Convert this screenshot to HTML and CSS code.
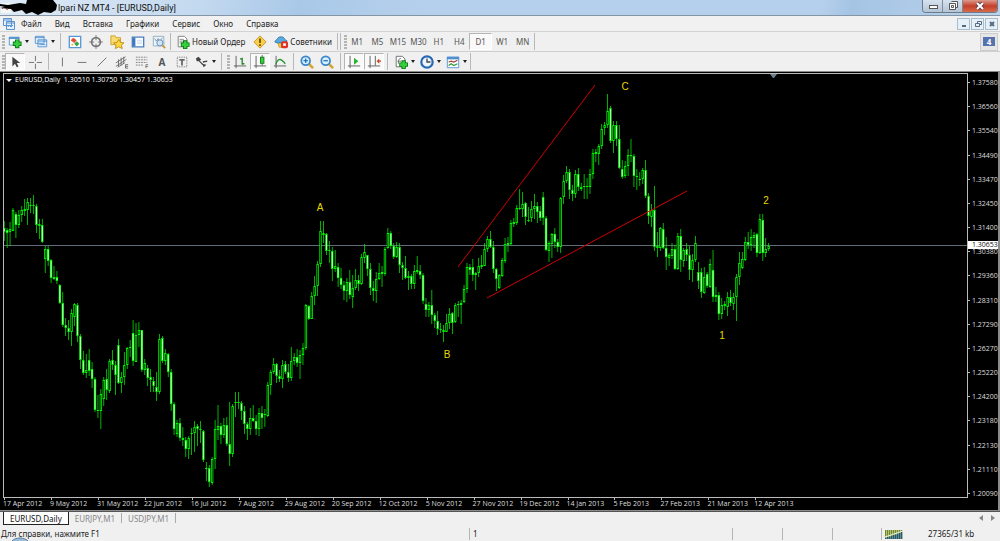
FILE: index.html
```html
<!DOCTYPE html>
<html lang="ru">
<head>
    <meta charset="UTF-8">
    <title>MT4 - [EURUSD,Daily]</title>
    <link rel="stylesheet" href="styles.css">
</head>
<body>
    <header class="titlebar">
        <svg class="scribble" width="58" height="15" viewBox="0 0 58 15"><rect x="1" y="3" width="10" height="10" rx="1" fill="#f4f8f4"/><path d="M2 9l3-3 2 4 3-3" fill="none" stroke="#c66"/><path d="M0 4L8 5 20 3 26 4 27 0H53L57 5 56 10 51 13 44 12 38 15 32 12 26 14 22 10 14 12 11 9 0 8 5 7 0 6z" fill="#000"/></svg>
        <span class="title">lpari NZ MT4 - [EURUSD,Daily]</span>
        <div class="window-buttons">
            <button type="button" aria-label="Свернуть"><svg width="12" height="8"><rect x="2.500" y="3.500" width="8" height="3" fill="#fff" stroke="#555"/></svg></button>
            <button type="button" aria-label="Развернуть"><svg width="12" height="10"><path d="M4.500.5h6v6h-2M2.500 2.500h6v6h-6zM4.500 4.500h2v2h-2z" fill="#fff" stroke="#555"/></svg></button>
            <button type="button" class="close" aria-label="Закрыть"><svg width="12" height="10"><path d="M3 2l6 6M9 2l-6 6" stroke="#644" stroke-width="4"/><path d="M3 2l6 6M9 2l-6 6" stroke="#fff" stroke-width="2"/></svg></button>
        </div>
    </header>

    <nav class="menubar">
        <svg width="12" height="12" viewBox="0 0 12 12" fill="#e4f0fb" stroke="#5b93cf"><path d="M.5.5h8v7h-8zM.5 2h8M3.500 3.500h8v8h-8zM3.500 5h8M5 9l1-2 2 2 2-2"/></svg>
        <button type="button">Файл</button>
        <button type="button">Вид</button>
        <button type="button">Вставка</button>
        <button type="button">Графики</button>
        <button type="button">Сервис</button>
        <button type="button">Окно</button>
        <button type="button">Справка</button>
        <div class="mdi-buttons">
            <button type="button" aria-label="Свернуть окно"><svg width="8" height="8"><path d="M2 6h4" stroke="#556b80" stroke-width="2"/></svg></button>
            <button type="button" aria-label="Восстановить окно"><svg width="8" height="8"><path d="M3.500 3V1.500h4v3H6M1.500 3.500h4v3h-4z" fill="none" stroke="#556b80"/></svg></button>
            <button type="button" aria-label="Закрыть окно"><svg width="8" height="8"><path d="M2 2l4 4M6 2L2 6" stroke="#556b80" stroke-width="2"/></svg></button>
        </div>
    </nav>

    <div class="toolbar">
        <i class="grip"></i>
        <button type="button" class="tool drop" aria-label="Новый график"><svg viewBox="0 0 16 16"><path d="M1.500 2.500h11v9h-11z" fill="#f4faff" stroke="#4f8fcf"/><path d="M1 3.500h12" stroke="#4f8fcf" stroke-width="2"/><path d="M10.500 5v10M5.500 10h10" stroke="#0a7a14" stroke-width="5"/><path d="M10.500 6v8M6.500 10h8" stroke="#35d03c" stroke-width="3"/></svg></button>
        <button type="button" class="tool drop" aria-label="Профили"><svg viewBox="0 0 16 16" fill="#e6f2fc" stroke="#4f8fcf"><path d="M1.500 1.500h10v8h-10zM1 3h11M4.500 5.500h10v8h-10zM4 7h11M6 11h7"/></svg></button>
        <i class="sep spaced"></i>
        <button type="button" class="tool" aria-label="Обзор рынка"><svg viewBox="0 0 16 16"><path d="M1.500 1.500h13v13h-13z" fill="#fff" stroke="#5797d6" stroke-width="1.500"/><path d="M3 6l3-3 4 3-3 3z" fill="#e05030"/><path d="M7 10l3-3 3 3-3 3z" fill="#35a845"/><path d="M4 10h2v2H4z" fill="#e0b040"/></svg></button>
        <button type="button" class="tool" aria-label="Окно данных"><svg viewBox="0 0 16 16" fill="none" stroke="#777"><circle cx="8" cy="8" r="5" stroke-width="2"/><path d="M8 0v6M8 10v6M0 8h6M10 8h6"/></svg></button>
        <button type="button" class="tool" aria-label="Навигатор"><svg viewBox="0 0 16 16"><path d="M1 1h5l1 2h5v8H1z" fill="#f8dc72" stroke="#c99b22"/><path d="M10 5l2 3.500 4 .5-3 2.500 1 4-4-2-4 2 1-4-3-2.500 4-.5z" fill="#ffd83c" stroke="#b9881c"/></svg></button>
        <button type="button" class="tool" aria-label="Терминал"><svg viewBox="0 0 16 16"><path d="M1.500 2.500h13v11h-13z" fill="#fff" stroke="#4a7fc1" stroke-width="1.500"/><path d="M2 3h3v10H2z" fill="#3d77bd"/><path d="M7 6h6M7 8h6M7 10h6" stroke="#c5d6ea"/></svg></button>
        <button type="button" class="tool" aria-label="Тестер стратегий"><svg viewBox="0 0 16 16"><path d="M1.500 1.500h12v11h-12z" fill="#eef5fb" stroke="#8aa9c4"/><path d="M3 4l2 3 2-3 2 3 3-4" fill="none" stroke="#7a8d9c"/><circle cx="9" cy="9" r="3.500" fill="#cfe5f5" stroke="#5d87b0"/><path d="M12 12l3 3" stroke="#c8952b" stroke-width="2"/></svg></button>
        <i class="sep"></i>
        <button type="button" class="tool wide"><svg viewBox="0 0 16 16"><path d="M2.500 1.500h7l3 3v9h-10z" fill="#fff" stroke="#777"/><path d="M4 5h5M4 7h7M4 9h4" stroke="#888"/><path d="M10.500 6v10M5.500 11h10" stroke="#0a7a14" stroke-width="5"/><path d="M10.500 7v8M6.500 11h8" stroke="#35d03c" stroke-width="3"/></svg>Новый Ордер</button>
        <button type="button" class="tool" aria-label="MetaEditor"><svg viewBox="0 0 16 16"><path d="M8 1l7 7-7 7-7-7z" fill="#f9cf45" stroke="#c39322"/><path d="M8 4v5M8 10.500v2" stroke="#6b5014" stroke-width="2"/></svg></button>
        <button type="button" class="tool wide"><svg viewBox="0 0 16 16"><path d="M4 8h9l-2 6H6z" fill="#f2cc4e" stroke="#c79a22"/><path d="M1 8c0-2 2-2 3-4s6-3 8 0c0 2 3 2 3 3-3 2-11 3-14 1z" fill="#5aa9dc" stroke="#3478a8"/><rect x="8" y="7" width="8" height="8" rx="2" fill="#df3324"/><path d="M10.500 9.500h3v3h-3z" fill="#fff"/></svg>Советники</button>
        <i class="sep"></i>
        <i class="sep"></i>
        <i class="grip"></i>
        <div class="periods">
            <button type="button">M1</button>
            <button type="button">M5</button>
            <button type="button">M15</button>
            <button type="button">M30</button>
            <button type="button">H1</button>
            <button type="button">H4</button>
            <button type="button" class="pressed">D1</button>
            <button type="button">W1</button>
            <button type="button">MN</button>
        </div>
        <i class="sep"></i>
        <button type="button" class="messages"><span>4</span></button>
    </div>

    <div class="toolbar lower">
        <i class="grip"></i>
        <button type="button" class="tool pressed" aria-label="Курсор"><svg viewBox="0 0 16 16"><path d="M5 2v11l3-3 2 4 2-1-2-4h4z" fill="#444"/></svg></button>
        <button type="button" class="tool" aria-label="Перекрестие"><svg viewBox="0 0 16 16" stroke="#666"><path d="M8.500 1v6M8.500 10v6M1 8.500h6M10 8.500h6"/></svg></button>
        <i class="sep spaced"></i>
        <button type="button" class="tool" aria-label="Вертикальная линия"><svg viewBox="0 0 16 16" stroke="#666"><path d="M8.500 3v10"/></svg></button>
        <button type="button" class="tool" aria-label="Горизонтальная линия"><svg viewBox="0 0 16 16" stroke="#666"><path d="M3 8.500h10"/></svg></button>
        <button type="button" class="tool" aria-label="Трендовая линия"><svg viewBox="0 0 16 16" stroke="#666"><path d="M3 13L13 3"/></svg></button>
        <button type="button" class="tool" aria-label="Равноудаленный канал"><svg viewBox="0 0 16 16" fill="none" stroke="#666"><path d="M1 9l11-7M1 13L13 5M3 14l8-5M4 5v8M7 3v9M10 2v8M15 11h-3v4h3M12 13h3"/></svg></button>
        <button type="button" class="tool" aria-label="Линии Фибоначчи"><svg viewBox="0 0 16 16" fill="none" stroke="#777"><path d="M1 2.500h13M1 5.500h13M1 8.500h13M1 11.500h9" stroke-dasharray="2 1"/><path d="M12.500 15v-4H15M12 13h3"/></svg></button>
        <button type="button" class="tool letter" aria-label="Текст">A</button>
        <button type="button" class="tool" aria-label="Текстовая метка"><svg viewBox="0 0 16 16" fill="none" stroke="#666"><path d="M2.500 2.500h11v11h-11z" stroke-dasharray="1 1"/><path d="M5 5.500h6M8 5v7" stroke-width="2"/></svg></button>
        <button type="button" class="tool drop" aria-label="Стрелки"><svg viewBox="0 0 16 16"><path d="M1 4l3-2 3 3-2 2-3 0z" fill="#444"/><path d="M5 7l4 4M9 8l5-1" stroke="#444" stroke-width="1.500"/><path d="M8 10l5 1-3 3z" fill="#444"/></svg></button>
        <i class="sep spaced"></i>
        <i class="grip"></i>
        <button type="button" class="tool" aria-label="Бары"><svg viewBox="0 0 16 16" fill="none"><path d="M3.500 1v14M1 12.500h14" stroke="#555"/><path d="M8 4.500h2M10.500 3v8M10 10h3" stroke="#23852c" stroke-width="1.500"/></svg></button>
        <button type="button" class="tool pressed" aria-label="Свечи"><svg viewBox="0 0 16 16" fill="none"><path d="M3.500 1v14M1 12.500h14M10.500 0v12" stroke="#555"/><rect x="8.500" y="2.500" width="4" height="7" fill="#31d53a" stroke="#15751c"/></svg></button>
        <button type="button" class="tool" aria-label="Линия"><svg viewBox="0 0 16 16" fill="none"><path d="M3.500 1v14M1 12.500h14" stroke="#555"/><path d="M3 11c2-6 5-9 11-1" stroke="#2a9434" stroke-width="1.500"/></svg></button>
        <i class="sep spaced"></i>
        <button type="button" class="tool" aria-label="Увеличить"><svg viewBox="0 0 16 16"><path d="M10 10l5 5" stroke="#d2a636" stroke-width="3"/><circle cx="6.500" cy="6.500" r="5" fill="#d8efff" stroke="#3c86cc" stroke-width="2"/><path d="M6.500 4v5M4 6.500h5" stroke="#2873b8" stroke-width="1.500"/></svg></button>
        <button type="button" class="tool" aria-label="Уменьшить"><svg viewBox="0 0 16 16"><path d="M10 10l5 5" stroke="#d2a636" stroke-width="3"/><circle cx="6.500" cy="6.500" r="5" fill="#d8efff" stroke="#3c86cc" stroke-width="2"/><path d="M4 6.500h5" stroke="#2873b8" stroke-width="1.500"/></svg></button>
        <i class="sep spaced"></i>
        <button type="button" class="tool pressed" aria-label="Автопрокрутка"><svg viewBox="0 0 16 16" fill="none"><path d="M3.500 1v14M1 12.500h14" stroke="#555"/><path d="M8 3l5 4-5 4z" fill="#27b532"/></svg></button>
        <button type="button" class="tool pressed" aria-label="Сдвиг графика"><svg viewBox="0 0 16 16" fill="none"><path d="M3.500 1v14M1 12.500h14M9.500 1v11" stroke="#555"/><path d="M14 4v6l-3-3z" fill="#c44a28"/><path d="M12 7h4" stroke="#c44a28" stroke-width="1.500"/></svg></button>
        <i class="sep spaced"></i>
        <button type="button" class="tool drop" aria-label="Индикаторы"><svg viewBox="0 0 16 16"><path d="M2.500 1.500h7l3 3v9h-10z" fill="#fff" stroke="#666"/><path d="M5 10c0-6 1-6 3-6M4 7h4" fill="none" stroke="#666"/><path d="M11 6v10M6 11h10" stroke="#0a7a14" stroke-width="5"/><path d="M11 7v8M7 11h8" stroke="#35d03c" stroke-width="3"/></svg></button>
        <button type="button" class="tool drop" aria-label="Периоды"><svg viewBox="0 0 16 16"><circle cx="8" cy="8" r="6.500" fill="#eef7ff" stroke="#2868b4" stroke-width="2.500"/><path d="M8 4v4h4" fill="none" stroke="#444" stroke-width="1.500"/></svg></button>
        <button type="button" class="tool drop" aria-label="Шаблоны"><svg viewBox="0 0 16 16" fill="none"><path d="M1.500 2.500h13v12h-13z" fill="#fff" stroke="#4f8fcf"/><path d="M1 3.500h14" stroke="#4f8fcf" stroke-width="3"/><path d="M3 8l3-1 3 1 4-2" stroke="#a04838" stroke-width="1.500"/><path d="M3 12l3-2 3 2 4-2" stroke="#2e9b43" stroke-width="1.500"/></svg></button>
        <i class="sep"></i>
    </div>

    <main class="chart">
        <div class="plot">
            <svg id="candles" viewBox="4 74 963 423">
                <path class="price-line" d="M4 245.500H967"/>
                <path class="trend" d="M458 267L595 85M487 298L687 191"/>
                <path class="shift-mark" d="M770 74h7l-3 4h-1z"/>
                <g class="waves">
                    <text x="320" y="211">A</text>
                    <text x="447" y="358">B</text>
                    <text x="625" y="90">C</text>
                    <text x="722" y="339">1</text>
                    <text x="766" y="204">2</text>
                </g>
            </svg>
            <div class="quote"><span class="caret"></span>EURUSD,Daily&nbsp; 1.30510 1.30750 1.30457 1.30653</div>
        </div>
        <div class="prices">
            <span>1.37580</span>
            <span>1.36560</span>
            <span>1.35540</span>
            <span>1.34490</span>
            <span>1.33470</span>
            <span>1.32450</span>
            <span>1.31400</span>
            <span>1.30380</span>
            <span>1.29360</span>
            <span>1.28310</span>
            <span>1.27290</span>
            <span>1.26270</span>
            <span>1.25220</span>
            <span>1.24200</span>
            <span>1.23180</span>
            <span>1.22130</span>
            <span>1.21110</span>
            <span>1.20090</span>
            <b class="current">1.30653</b>
        </div>
        <div class="dates">
            <span>17 Apr 2012</span>
            <span>9 May 2012</span>
            <span>31 May 2012</span>
            <span>22 Jun 2012</span>
            <span>16 Jul 2012</span>
            <span>7 Aug 2012</span>
            <span>29 Aug 2012</span>
            <span>20 Sep 2012</span>
            <span>12 Oct 2012</span>
            <span>5 Nov 2012</span>
            <span>27 Nov 2012</span>
            <span>19 Dec 2012</span>
            <span>14 Jan 2013</span>
            <span>5 Feb 2013</span>
            <span>27 Feb 2013</span>
            <span>21 Mar 2013</span>
            <span>12 Apr 2013</span>
        </div>
    </main>

    <div class="tabs">
        <button type="button" class="active">EURUSD,Daily</button>
        <button type="button">EURJPY,M1</button>
        <button type="button">USDJPY,M1</button>
        <div class="scroll">
            <button type="button" aria-label="Назад"><svg width="4" height="6"><path d="M4 0v6L0 3z" fill="#888"/></svg></button>
            <button type="button" aria-label="Вперед"><svg width="4" height="6"><path d="M0 0v6l4-3z" fill="#888"/></svg></button>
        </div>
    </div>

    <footer class="status">
        <span class="help">Для справки, нажмите F1</span>
        <span class="profile">1</span>
        <span class="cell"></span>
        <span class="cell"></span>
        <span class="cell"></span>
        <span class="traffic">
            <svg width="18" height="9" viewBox="0 0 18 9"><path d="M.5 0v9M2.500 0v9M4.500 0v9M6.500 0v9M8.500 0v9M10.500 0v9M12.500 0v9M14.500 0v9M16.500 0v9" stroke="#6f8c1c" stroke-width="1.500"/><path d="M.5 8v1M2.500 7v2M4.500 7v2M6.500 6v3M8.500 5v4M10.500 5v4M12.500 4v5M14.500 3v6M16.500 2v7" stroke="#1f5a78" stroke-width="1.500"/><path d="M0 7l18-6" stroke="#f0f4e8"/></svg>
            27365/31 kb
        </span>
        <svg class="orb" width="18" height="4" viewBox="0 0 18 4"><path d="M1 4c3-4 13-4 16 0" fill="#9dbdd6" stroke="#557f9f"/></svg>
    </footer>

    <script src="chart.js"></script>
</body>
</html>
```
FILE: styles.css
```css
* {
    box-sizing: border-box;
}

body {
    margin: 0;
    height: 100vh;
    display: flex;
    flex-direction: column;
    overflow: hidden;
    background: #f0f0f0;
    color: #222;
    font-family: "Noto Sans", "Open Sans", sans-serif;
    font-size: 8px;
}

button {
    margin: 0;
    padding: 0;
    border: 0;
    background: none;
    color: inherit;
    font: inherit;
    display: flex;
    align-items: center;
    justify-content: center;
}

svg {
    display: block;
    flex: none;
}

/* window title */

.titlebar {
    height: 16px;
    flex: none;
    display: flex;
    align-items: center;
    border-bottom: 1px solid #8495a5;
    background: linear-gradient(100deg, #dfeaf6 0, #c3d9ef 20%, #a9c8e8 30%, #b5d0ec 42%, #b5d0ec 82%, #a5c4e4 85%, #bad3ec 100%);
}

.title {
    color: #111;
    font-family: Roboto, sans-serif;
    font-size: 9px;
}

.window-buttons {
    margin: 0 2px 0 auto;
    align-self: flex-start;
    display: flex;
    height: 13px;
    border: 1px solid #6d7b88;
    border-top: 0;
    border-radius: 0 0 4px 4px;
    overflow: hidden;
}

.window-buttons button {
    width: 20px;
    border-right: 1px solid #7e8b98;
    background: linear-gradient(#d6e2ee, #b4c5d7);
}

.window-buttons .close {
    width: 34px;
    border-right: 0;
    background: linear-gradient(#dc9a8c, #c4402a 50%, #d96a4c);
}

/* menu */

.menubar {
    height: 16px;
    flex: none;
    display: flex;
    align-items: center;
    padding: 0 2px 0 3px;
    border-bottom: 1px solid #d2d2d2;
    background: #f1f1f1;
}

.menubar > button {
    margin-left: 6px;
    margin-right: 7px;
}

.mdi-buttons {
    margin-left: auto;
    display: flex;
    gap: 1px;
}

.mdi-buttons button {
    width: 13px;
    height: 12px;
    border: 1px solid #a9bccd;
    background: #e6f0f9;
}

/* toolbars */

.toolbar {
    height: 20px;
    flex: none;
    display: flex;
    align-items: center;
    border-bottom: 1px solid #cfcfcf;
}

.lower {
    height: 19px;
    border-bottom: 0;
}

.grip {
    width: 3px;
    height: 14px;
    margin-left: 2px;
    background: repeating-linear-gradient(#b4b4b4 0, #b4b4b4 2px, #f0f0f0 2px, #f0f0f0 3px);
}

.sep {
    width: 1px;
    height: 17px;
    margin: 0 1px;
    background: #b8b8b8;
}

.spaced {
    margin: 0 3px;
}

.tool {
    width: 21px;
    height: 17px;
    flex: none;
}

.lower .tool {
    width: 20px;
}

.tool svg {
    width: 14px;
    height: 14px;
}

.drop,
.lower .drop {
    width: 26px;
}

.drop::after,
.caret {
    content: "";
    border: 2px solid transparent;
    border-top: 3px solid #222;
    border-bottom: 0;
    margin-left: 3px;
}

.wide {
    width: auto;
    padding: 0 4px;
    gap: 2px;
}

.letter {
    color: #555;
    font-size: 10px;
    font-weight: bold;
}

.pressed {
    border: 1px solid #b5b5b5;
    border-right-color: #fff;
    border-bottom-color: #fff;
    background: #f9f9f9;
}

.periods {
    width: 186px;
    height: 17px;
    display: flex;
    color: #555;
}

.periods button {
    flex: 1;
}

.messages {
    width: 18px;
    height: 18px;
    margin: 0 2px 0 auto;
    border: 1px solid #ccc;
    background: #e6e6e6;
}

.messages span {
    width: 12px;
    height: 9px;
    background: #5673ae;
    color: #fff;
    font-size: 8px;
    font-weight: bold;
    line-height: 9px;
}

/* chart */

.chart {
    flex: 1;
    min-height: 0;
    display: grid;
    grid-template-columns: minmax(0, 1fr) 30px;
    grid-template-rows: minmax(0, 1fr) 12px;
    padding: 1px 0 0 3px;
    border: solid #8c8c8c;
    border-width: 1px 2px 1px 0;
    background: #000;
    color: #ddd;
    font-family: "Open Sans", "Noto Sans", sans-serif;
    font-size: 7px;
    line-height: 8px;
}

.plot {
    position: relative;
    border: 1px solid #bbb;
}

.plot svg {
    width: 100%;
    height: 100%;
}

.quote {
    position: absolute;
    top: 2px;
    left: 2px;
    display: flex;
    align-items: center;
    gap: 3px;
    color: #fff;
}

.quote .caret {
    border-width: 3px 3px 0;
    border-top-color: #fff;
    margin: 0;
}

.price-line {
    stroke: #5f6b76;
}

.trend {
    stroke: #d00000;
    fill: none;
}

.shift-mark {
    fill: #708090;
}

.waves {
    fill: #e8d800;
    font: 10px "Liberation Sans", Arial, sans-serif;
    text-anchor: middle;
}

.prices {
    position: relative;
    display: flex;
    flex-direction: column;
    justify-content: space-between;
    padding-top: 6px;
}

.prices span::before {
    content: "";
    display: inline-block;
    width: 2px;
    height: 1px;
    margin-right: 2px;
    vertical-align: 2px;
    background: #bbb;
}

.current {
    position: absolute;
    top: 168px;
    left: 0;
    right: 0;
    padding-left: 4px;
    background: #fff;
    color: #111;
    font-weight: normal;
}

.dates {
    grid-column: 1 / 2;
    display: grid;
    grid-template-columns: repeat(17, minmax(0, 20fr)) minmax(0, 71fr);
    white-space: nowrap;
}

.dates span {
    position: relative;
    padding-top: 2px;
}

.dates span::before {
    content: "";
    position: absolute;
    top: 0;
    left: 1px;
    width: 1px;
    height: 2px;
    background: #bbb;
}

/* chart tabs */

.tabs {
    height: 16px;
    flex: none;
    display: flex;
    align-items: flex-start;
    padding-left: 3px;
    border-top: 1px solid #555;
    color: #888;
}

.tabs > button {
    height: 10px;
    margin-top: 1px;
    padding: 0 6px;
    border-right: 1px solid #aaa;
}

.tabs > .active {
    height: 13px;
    margin-top: 0;
    border: 1px solid #222;
    border-top: 0;
    background: #fff;
    color: #111;
}

.scroll {
    display: flex;
    gap: 8px;
    margin: 3px 5px 0 auto;
}

/* status bar */

.status {
    position: relative;
    height: 14px;
    flex: none;
    display: grid;
    grid-template-columns: minmax(0, 469fr) minmax(0, 263fr) 50px 50px 49px 119px;
    align-items: center;
    line-height: 12px;
}

.status span {
    height: 12px;
}

.status .help {
    padding-left: 1px;
}

.profile,
.cell,
.traffic {
    padding-left: 3px;
    border-left: 1px solid #b5b5b5;
}

.traffic {
    display: flex;
    align-items: center;
    gap: 25px;
}

.orb {
    position: absolute;
    left: 11px;
    bottom: 0;
}
```
FILE: chart.js
```js
// high, top of body, bottom of body, low, 1 = up / 0 = down
const bars = [
    [221,228,232,241,0],[228,230,233,248,0],[222,229,232,246,1],[208,210,231,231,1],[212,214,225,238,0],
    [210,215,225,228,1],[206,210,215,222,1],[199,209,211,216,1],[198,202,210,225,1],[198,205,206,213,0],
    [195,205,206,214,0],[204,206,225,233,0],[219,224,226,239,0],[219,225,242,243,0],[246,249,259,273,1],
    [246,249,261,266,0],[259,260,278,283,0],[266,277,279,280,0],[271,277,281,284,0],[284,285,303,304,0],
    [292,303,325,327,0],[318,325,328,336,0],[320,328,332,340,0],[309,313,332,346,1],[303,304,317,326,1],
    [303,305,336,342,0],[334,336,360,369,0],[351,360,373,375,0],[354,370,373,378,1],[349,360,371,376,0],
    [362,369,379,388,0],[377,379,410,412,0],[395,410,411,418,0],[389,394,411,429,1],[377,380,399,406,1],
    [369,379,390,400,0],[359,361,391,393,1],[350,360,365,370,0],[361,365,375,395,0],[339,345,383,384,0],
    [372,377,383,393,1],[352,365,377,385,1],[347,348,365,369,1],[340,347,348,357,0],[320,333,361,366,0],
    [323,335,362,362,1],[322,330,335,347,1],[330,330,370,372,0],[359,363,370,375,1],[365,368,378,386,0],
    [369,377,380,392,0],[377,381,386,392,0],[372,387,392,401,0],[334,339,392,394,1],[336,338,361,363,0],
    [349,353,361,365,1],[353,354,372,377,0],[369,372,404,411,0],[402,404,429,435,0],[420,423,434,437,1],
    [418,423,438,441,0],[427,438,440,446,0],[437,440,449,457,0],[436,438,449,459,1],[428,433,434,455,1],
    [421,427,433,452,1],[424,426,429,446,0],[421,429,430,443,0],[430,431,460,462,0],[462,468,469,481,0],
    [465,468,482,487,0],[457,459,483,485,1],[420,429,459,469,1],[405,426,430,440,1],[423,426,435,444,0],
    [418,425,435,438,1],[417,425,444,446,0],[402,444,454,466,0],[404,406,454,457,1],[392,402,403,417,1],
    [392,402,403,409,0],[401,403,411,420,0],[406,411,424,434,0],[422,424,429,440,0],[408,418,429,435,1],
    [405,418,421,422,0],[415,421,429,435,0],[408,413,429,436,1],[406,413,418,429,0],[409,414,415,427,0],
    [382,385,416,417,1],[370,372,385,395,1],[358,364,372,374,1],[363,364,376,383,0],[370,376,379,382,0],
    [360,365,379,388,1],[361,364,372,374,0],[364,372,378,382,0],[347,361,378,381,1],[353,357,361,365,1],
    [349,357,363,367,0],[350,355,363,379,1],[343,348,355,365,1],[304,305,348,350,1],[305,306,319,320,0],
    [292,296,319,319,1],[276,286,296,305,1],[261,264,286,296,1],[221,231,264,267,1],[221,233,235,243,0],
    [233,234,251,255,0],[241,250,251,263,0],[247,251,269,281,0],[250,266,269,272,1],[263,267,278,287,0],
    [268,278,285,289,0],[281,285,291,300,0],[278,282,291,302,1],[270,282,295,299,0],[275,288,297,308,1],
    [269,280,288,290,1],[275,280,284,291,0],[254,257,284,285,1],[244,252,258,263,1],[255,255,269,276,0],
    [263,269,288,295,0],[281,288,291,301,0],[272,279,291,303,1],[263,273,279,280,1],[266,272,274,287,0],
    [247,249,274,276,1],[228,233,248,249,1],[231,233,246,249,0],[243,246,257,259,0],[242,247,257,258,1],
    [243,247,265,273,0],[262,265,268,280,0],[256,268,278,279,0],[271,276,278,290,0],[274,276,284,289,0],
    [265,271,284,289,1],[256,270,272,274,0],[265,271,275,279,0],[273,275,301,304,0],[298,304,310,317,0],
    [302,305,310,317,1],[290,305,315,324,0],[313,315,321,328,0],[311,321,329,335,0],[323,329,330,333,0],
    [325,330,332,342,0],[314,323,332,332,1],[308,314,323,329,1],[312,313,323,334,0],[303,305,322,323,1],
    [301,304,305,317,1],[300,303,305,324,1],[285,289,302,303,1],[263,267,289,293,1],[264,267,270,275,0],
    [259,267,275,281,0],[272,273,275,290,1],[258,266,273,277,1],[255,265,267,269,1],[243,249,266,266,1],
    [236,239,249,252,1],[231,239,247,248,0],[241,247,269,273,0],[268,269,279,291,0],[274,275,288,289,1],
    [258,260,276,277,1],[238,244,261,263,1],[237,243,245,252,1],[220,223,244,246,1],[218,222,224,227,0],
    [205,208,223,225,1],[189,208,209,210,0],[192,204,209,217,1],[202,203,217,225,0],[207,220,221,222,0],
    [201,209,218,222,1],[194,206,209,219,1],[202,206,212,223,0],[206,211,218,221,0],[192,197,218,225,0],
    [216,218,250,251,0],[241,243,251,262,1],[233,234,244,258,1],[228,234,242,248,0],[239,242,247,252,0],
    [197,198,247,253,1],[175,181,197,204,1],[166,172,181,183,1],[169,172,190,199,0],[185,190,194,201,0],
    [170,174,194,198,1],[168,174,187,191,0],[183,187,189,191,0],[174,186,187,199,1],[178,186,187,199,0],
    [169,174,187,194,1],[149,153,174,179,1],[149,152,154,162,0],[144,146,154,165,1],[124,129,146,149,1],
    [122,125,128,135,1],[94,111,125,128,1],[106,108,141,143,0],[121,125,141,153,1],[121,125,139,146,0],
    [125,139,168,169,0],[160,169,177,179,0],[161,166,176,178,1],[149,155,166,176,1],[139,155,156,162,0],
    [154,156,176,187,0],[169,176,177,190,0],[172,179,180,186,0],[168,170,179,184,1],[160,170,196,198,0],
    [193,196,216,224,0],[204,210,217,227,1],[186,210,247,251,0],[232,246,248,257,1],[227,228,248,251,1],
    [223,229,248,249,0],[237,248,257,270,0],[253,255,258,266,1],[243,249,256,259,1],[245,249,269,270,0],
    [233,236,269,270,1],[229,236,260,272,0],[248,250,261,267,1],[243,249,255,261,0],[246,255,270,280,0],
    [254,260,270,282,1],[236,243,260,262,1],[262,272,281,289,0],[268,272,292,298,0],[267,277,293,294,1],
    [272,274,286,288,0],[259,264,287,288,1],[250,270,297,302,0],[287,295,297,302,1],[292,295,314,320,0],
    [298,305,314,319,1],[301,304,306,310,1],[292,297,307,316,1],[290,297,303,306,0],[293,297,304,310,1],
    [274,277,297,321,1],[252,263,277,285,1],[252,259,268,269,1],[237,242,260,261,1],[232,242,245,249,0],
    [229,237,245,251,1],[232,235,238,248,1],[233,234,253,257,0],[214,219,253,254,1],[214,220,253,261,0],
    [238,249,253,257,1],[243,246,249,251,1]
];

const svg = document.getElementById('candles');
const first = 4.2;
const step = 2.929;
const unit = step / 4;

function addRect(x, y, width, height, fill) {
    const rect = document.createElementNS('http://www.w3.org/2000/svg', 'rect');
    rect.setAttribute('x', x.toFixed(2));
    rect.setAttribute('y', y);
    rect.setAttribute('width', width.toFixed(2));
    rect.setAttribute('height', height);
    rect.setAttribute('fill', fill);
    svg.insertBefore(rect, svg.querySelector('.trend'));
}

bars.forEach(([high, top, bottom, low, up], i) => {
    const x = first + i * step;
    const height = Math.max(bottom - top, 1);
    addRect(x - unit / 2, high, unit, Math.max(low - high, 1), '#00f400');
    addRect(x - unit * 1.6, top, unit * 3.2, height, '#00f400');
    if (height > 2) {
        addRect(x - unit / 2, top + 1, unit, height - 2, up ? '#000' : '#fff');
    }
});
```
